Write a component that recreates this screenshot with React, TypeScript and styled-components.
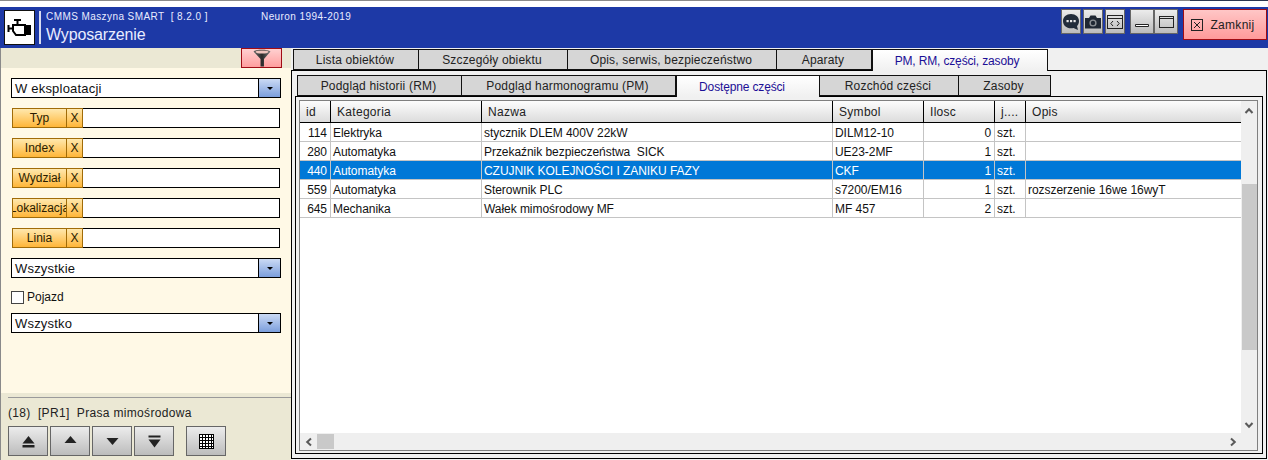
import React from "react";
import styled, { createGlobalStyle } from "styled-components";

const Global = createGlobalStyle`
  html, body { margin: 0; padding: 0; background: #5a5a5a; }
  body { font-family: "Liberation Sans", Arial, sans-serif; font-size: 12px; color: #111; }
  #root { width: 1268px; height: 460px; overflow: hidden; }
`;

const Page = styled.div`
  width: 1268px; height: 460px; display: flex; flex-direction: column; overflow: hidden;
`;
const TopStrip = styled.div`
  height: 7px; flex: none;
  background: linear-gradient(to right, #8a8a8a 1190px, #2a3550 1190px) top / 100% 1px no-repeat, #fff;
`;
const Header = styled.header`
  height: 41px; flex: none; background: #1d39a6; display: flex; align-items: flex-start; padding: 2px 1px 0 4px; box-sizing: border-box;
`;
const LogoBox = styled.div`
  width: 31px; height: 35px; margin-top: 1px; box-sizing: border-box; background: #fff; border: 1px solid #111; display: flex; align-items: center; justify-content: center;
`;
const Divider = styled.div`
  width: 2px; height: 33px; background: #d8dcf0; margin: 2px 5px 0 4px; flex: none;
`;
const TitleBlock = styled.div`
  color: #e9ecff; display: flex; flex-direction: column; width: 1015px; flex: none;
`;
const TitleLine = styled.div`
  display: flex; font-size: 10px; line-height: 12px; letter-spacing: 0.42px; white-space: pre; margin-top: 2px;
`;
const AppName = styled.span`
  width: 215px;
`;
const ScreenName = styled.div`
  font-size: 16px; line-height: 20px; margin-top: 2px; letter-spacing: -0.15px;
`;
const WinGroup = styled.div`
  display: flex; gap: ${p => p.$gap}px; margin-right: ${p => p.$after}px; flex: none;
`;
const WinButton = styled.button`
  width: ${p => p.$w}px; height: 25px; padding: 0; box-sizing: border-box; border: 1px solid #666; background: linear-gradient(#ececec, #bcbcbc); display: flex; align-items: center; justify-content: center;
`;
const CloseButton = styled.button`
  width: 84px; height: 31px; box-sizing: border-box; padding: 0 4px 0 0; border: 1px solid #a00c14; background: linear-gradient(#ffc6c6, #ff9a9a); color: #222; font: 12px "Liberation Sans", Arial, sans-serif; letter-spacing: 0.3px; display: flex; align-items: center; justify-content: center; gap: 7px;
`;

const Body = styled.div`
  flex: 1; display: flex; min-height: 0;
`;
const Sidebar = styled.aside`
  width: 291px; flex: none; display: flex; flex-direction: column; background: #fff9e6; border-left: 1px solid #8a8a8a; box-sizing: border-box;
`;
const FilterBar = styled.div`
  height: 20px; flex: none; background: #ebe8d4; display: flex; justify-content: flex-end; padding-right: 9px;
`;
const FilterButton = styled.button`
  width: 41px; height: 20px; padding: 0; box-sizing: border-box; border: 1px solid #a00c14; background: linear-gradient(#ffd0d0, #ff9e9e); display: flex; align-items: center; justify-content: center;
`;
const Filters = styled.div`
  flex: 1; padding: 10px 10px 0 10px; display: flex; flex-direction: column; gap: 10px;
`;
const Combo = styled.div`
  height: 20px; width: 270px; flex: none; box-sizing: border-box; border: 1px solid #000; background: #fff; display: flex; align-items: stretch;
`;
const ComboText = styled.div`
  flex: 1; padding-left: 3px; font-size: 13px; line-height: 20px; color: #111; letter-spacing: 0.2px;
`;
const ComboArrow = styled.div`
  width: 21px; border-left: 1px solid #000; background: linear-gradient(#cbdaf4, #7c9fdc); display: flex; align-items: center; justify-content: center;
  &::after { content: ""; border-left: 3.5px solid transparent; border-right: 3.5px solid transparent; border-top: 3.5px solid #000; }
`;
const FilterRow = styled.div`
  height: 20px; width: 268px; margin-left: 1px; flex: none; display: flex;
`;
const OrangeButton = styled.div`
  width: ${p => p.$w}px; flex: none; box-sizing: border-box; border: 1px solid #a16c08; border-left-width: ${p => p.$noLeft ? 0 : 1}px; background: linear-gradient(#ffe8ad, #ffb638); display: flex; align-items: center; justify-content: center; overflow: hidden; white-space: nowrap; font-size: 12px; color: #2a1c00;
`;
const FilterInput = styled.div`
  flex: 1; box-sizing: border-box; background: #fff; border: 1px solid #000; border-left: none;
`;
const CheckRow = styled.label`
  display: flex; align-items: center; gap: 3px; height: 14px; margin: 2px 0 -1px; font-size: 12px;
`;
const CheckBox = styled.span`
  width: 13px; height: 13px; box-sizing: border-box; border: 1px solid #444; background: #fff; flex: none;
`;
const Footer = styled.div`
  height: 67px; flex: none; background: #ebe8d4; padding: 4px 0 0 7px; box-sizing: border-box; display: flex; flex-direction: column;
`;
const FooterRule = styled.div`
  height: 1px; background: #9a9a9a;
`;
const FooterText = styled.div`
  height: 28px; line-height: 30px; font-size: 12px; white-space: pre; color: #222; letter-spacing: 0.32px;
`;
const NavRow = styled.div`
  display: flex; gap: 2px;
`;
const NavButton = styled.button`
  width: 40px; height: 30px; padding: 0; box-sizing: border-box; border: 1px solid #666; background: linear-gradient(#ececec, #bcbcbc); display: flex; align-items: center; justify-content: center; margin-left: ${p => p.$ml || 0}px;
`;

const Main = styled.main`
  flex: 1; display: flex; flex-direction: column; background: #f0f0f0; min-width: 0;
`;
const TabRow = styled.div`
  display: flex; flex: none; height: ${p => p.$h}px; padding-left: 2px; margin-top: ${p => p.$mt}px; position: relative; z-index: 1;
`;
const Tab = styled.div`
  width: ${p => p.$w}px; box-sizing: border-box; height: ${p => p.$h + (p.$active ? 1 : 0)}px; border: 1px solid #111; border-left-width: ${p => p.$first || p.$active ? 1 : 0}px; border-bottom-width: ${p => p.$active ? 0 : 1}px;
  background: ${p => p.$active ? "linear-gradient(#ffffff, #f0f0f0)" : "#d6d6d6"};
  color: ${p => p.$active ? "#1c0f96" : "#222"};
  display: flex; align-items: center; justify-content: center; font-size: 12px; letter-spacing: ${p => p.$active ? "-0.15px" : "0.17px"}; padding-right: ${p => p.$pr ?? 2}px; white-space: nowrap;
`;
const OuterPanel = styled.div`
  width: 976px; height: 389px; box-sizing: border-box; border: 1px solid #000; background: #f0f0f0; padding: 4px 3px 4px 3px; display: flex; flex-direction: column; flex: none;
`;
const InnerPanel = styled.div`
  flex: 1; min-height: 0; width: 968px; box-sizing: border-box; border: 1px solid #000; background: #f0f0f0; padding: 3px 3px 2px 3px; display: flex;
`;
const GridFrame = styled.div`
  flex: 1; box-sizing: border-box; border: 1px solid #808080; display: grid; grid-template-columns: 941px 16px; grid-template-rows: 1fr 17px; background: #fff; margin-right: 1px;
`;
const TableArea = styled.div`
  background: #fff; overflow: hidden;
`;
const Table = styled.table`
  border-collapse: separate; border-spacing: 0; table-layout: fixed; width: 941px; font-size: 12px;
`;
const Th = styled.th`
  height: 21px; padding: 0 0 0 ${p => p.$pad}px; box-sizing: content-box; text-align: left; font-weight: 400; color: #222; letter-spacing: 0.3px; background: linear-gradient(#fdfdfd, #dcdcdc); border-bottom: 1px solid #000; border-right: 1px solid #000; white-space: nowrap; overflow: hidden;
  &:last-child { border-right: none; }
`;
const Tr = styled.tr`
  background: ${p => p.$selected ? "#0078d7" : "#fff"};
  color: ${p => p.$selected ? "#fff" : "#111"};
`;
const Td = styled.td`
  height: 17px; padding: 1px ${p => p.$right ? 3 : 0}px 0 ${p => p.$right ? 0 : 2}px; text-align: ${p => p.$right ? "right" : "left"}; border-bottom: 1px solid #c4c4c4; border-right: 1px solid #c4c4c4; white-space: pre; overflow: hidden; letter-spacing: -0.05px;
  &:last-child { border-right: none; }
`;
const VBar = styled.div`
  grid-row: 1; grid-column: 2; background: #efefef; display: flex; flex-direction: column; align-items: center; position: relative;
`;
const ArrowSlot = styled.div`
  height: ${p => p.$h}px; flex: none; display: flex; align-items: center; justify-content: center; width: 100%;
`;
const HArrowSlot = styled.div`
  height: 15px; width: 17px; flex: none; display: flex; align-items: center; justify-content: center;
`;
const VThumb = styled.div`
  width: 15px; height: 166px; margin-left: 1px; background: #c9c9c9; flex: none;
`;
const VSpacer = styled.div`
  flex: 1;
`;
const HBar = styled.div`
  grid-row: 2; grid-column: 1; background: #efefef; display: flex; align-items: center;
`;
const HThumb = styled.div`
  width: 17px; height: 15px; background: #c9c9c9; flex: none;
`;
const Corner = styled.div`
  grid-row: 2; grid-column: 2; background: #efefef;
`;
const ChevronSvg = styled.svg`
  transform: rotate(${p => p.$rot}deg);
`;
const ShiftedSvg = styled.svg`
  margin-top: ${p => p.$mt || 0}px;
`;

const Chevron = ({ rot }: { rot: number }) => (
  <ChevronSvg $rot={rot} width="10" height="10" viewBox="0 0 10 10">
    <path d="M1.5 7 L5 3.2 L8.5 7" fill="none" stroke="#5a5a5a" strokeWidth="2" />
  </ChevronSvg>
);

const EngineIcon = () => (
  <svg width="25" height="18" viewBox="0 0 25 18">
    <g fill="none" stroke="#000" strokeWidth="2">
      <path d="M7 1 H14 M10.5 1 V5" />
      <path d="M6 6 H18 V16 H9 L6 12 Z" />
      <path d="M6 9.5 H2 M1.5 6 V13" />
    </g>
    <rect x="18" y="6" width="6" height="10" fill="#000" />
  </svg>
);
const ChatIcon = () => (
  <svg width="18" height="18" viewBox="0 0 18 18">
    <path d="M9 1 C13.7 1 17 4 17 8 C17 10.5 16 12 15 13 L16 17 L11.5 15 C10.8 15.2 9.9 15.3 9 15.3 C4.3 15.3 1 12.2 1 8 C1 4 4.3 1 9 1 Z" fill="#222c3a" />
    <g fill="#e8e8e8"><rect x="4.5" y="7" width="2.2" height="2.2" /><rect x="8" y="7" width="2.2" height="2.2" /><rect x="11.5" y="7" width="2.2" height="2.2" /></g>
  </svg>
);
const CameraIcon = () => (
  <svg width="18" height="16" viewBox="0 0 18 16">
    <path d="M1 4 H5 L6.5 1.5 H11.5 L13 4 H17 V14.5 H1 Z" fill="#1f2733" />
    <circle cx="9" cy="9" r="3.6" fill="#8b8f94" />
    <circle cx="9" cy="9" r="2.2" fill="#1f2733" />
  </svg>
);
const CodeIcon = () => (
  <svg width="16" height="14" viewBox="0 0 16 14">
    <rect x="0.5" y="0.5" width="15" height="13" fill="none" stroke="#222" />
    <path d="M1 3.5 H15" stroke="#222" />
    <path d="M6 6 L3.8 8.5 L6 11 M10 6 L12.2 8.5 L10 11" fill="none" stroke="#222" />
  </svg>
);
const MinimizeIcon = () => (
  <svg width="16" height="18" viewBox="0 0 16 18"><path d="M1.5 11.5 H14.5 V13.5 H1.5 Z" fill="#fff" stroke="#222" strokeWidth="1" /></svg>
);
const MaximizeIcon = () => (
  <ShiftedSvg $mt={1} width="15" height="13" viewBox="0 0 15 13">
    <rect x="0.5" y="0.5" width="14" height="11" fill="none" stroke="#222" />
    <path d="M1 2.5 H14" stroke="#222" />
  </ShiftedSvg>
);
const CloseIcon = () => (
  <svg width="12" height="12" viewBox="0 0 12 12">
    <rect x="0.5" y="0.5" width="11" height="11" fill="none" stroke="#222" />
    <path d="M3 3 L9 9 M9 3 L3 9" stroke="#222" />
  </svg>
);
const FunnelIcon = () => (
  <svg width="20" height="18" viewBox="0 0 20 18">
    <defs>
      <linearGradient id="fn" x1="0" x2="1"><stop offset="0" stopColor="#666" /><stop offset="0.5" stopColor="#2a2a2a" /><stop offset="1" stopColor="#777" /></linearGradient>
    </defs>
    <path d="M1.5 2.5 C4 0 16 0 18.5 2.5 L12 10 V17.5 H8.5 V10 Z" fill="url(#fn)" />
    <ellipse cx="10" cy="3" rx="6.5" ry="1.6" fill="#efc4bd" />
  </svg>
);
const NavFirst = () => (
  <svg width="13" height="13" viewBox="0 0 13 13"><path d="M6.5 1 L12.5 8.5 H0.5 Z" fill="#222" /><rect x="0.5" y="10" width="12" height="2.5" fill="#222" /></svg>
);
const NavUp = () => (
  <ShiftedSvg $mt={-3} width="13" height="10" viewBox="0 0 13 10"><path d="M6.5 1 L12.5 8 H0.5 Z" fill="#222" /></ShiftedSvg>
);
const NavDown = () => (
  <ShiftedSvg $mt={1} width="13" height="10" viewBox="0 0 13 10"><path d="M6.5 8 L12.5 1 H0.5 Z" fill="#222" /></ShiftedSvg>
);
const NavLast = () => (
  <svg width="13" height="13" viewBox="0 0 13 13"><rect x="0.5" y="0.5" width="12" height="2" fill="#222" /><path d="M6.5 12.5 L12.5 4.5 H0.5 Z" fill="#222" /></svg>
);
const GridIcon = () => (
  <svg width="15" height="15" viewBox="0 0 15 15">
    <rect x="0.5" y="0.5" width="14" height="14" fill="#fff" stroke="#000" />
    <path d="M0 3.5 H15 M0 6.5 H15 M0 9.5 H15 M0 12.5 H15 M3.5 0 V15 M6.5 0 V15 M9.5 0 V15 M12.5 0 V15" stroke="#000" strokeWidth="1" fill="none" />
  </svg>
);

const filterRows = ["Typ", "Index", "Wydział", "Lokalizacja", "Linia"];
const mainTabs = [
  { t: "Lista obiektów", w: 126 }, { t: "Szczegóły obiektu", w: 149 }, { t: "Opis, serwis, bezpieczeństwo", w: 209 },
  { t: "Aparaty", w: 95 }, { t: "PM, RM, części, zasoby", w: 176, active: true, pr: 6 },
];
const subTabs = [
  { t: "Podgląd historii (RM)", w: 165 }, { t: "Podgląd harmonogramu (PM)", w: 214 }, { t: "Dostępne części", w: 144, active: true, pr: 12 },
  { t: "Rozchód części", w: 139 }, { t: "Zasoby", w: 92 },
];
const cols = [
  { t: "id", w: 31, pad: 6 }, { t: "Kategoria", w: 151, pad: 6 }, { t: "Nazwa", w: 351, pad: 6 },
  { t: "Symbol", w: 91, pad: 6 }, { t: "Ilosc", w: 71, pad: 6 }, { t: "j....", w: 31, pad: 6 }, { t: "Opis", w: 215, pad: 6 },
];
const rows = [
  ["114", "Elektryka", "stycznik DLEM 400V 22kW", "DILM12-10", "0", "szt.", ""],
  ["280", "Automatyka", "Przekaźnik bezpieczeństwa  SICK", "UE23-2MF", "1", "szt.", ""],
  ["440", "Automatyka", "CZUJNIK KOLEJNOŚCI I ZANIKU FAZY", "CKF", "1", "szt.", ""],
  ["559", "Automatyka", "Sterownik PLC", "s7200/EM16", "1", "szt.", "rozszerzenie 16we 16wyT"],
  ["645", "Mechanika", "Wałek mimośrodowy MF", "MF 457", "2", "szt.", ""],
];

export default function App() {
  return (
    <Page>
      <Global />
      <TopStrip />
      <Header>
        <LogoBox><EngineIcon /></LogoBox>
        <Divider />
        <TitleBlock>
          <TitleLine><AppName>CMMS Maszyna SMART  [ 8.2.0 ]</AppName><span>Neuron 1994-2019</span></TitleLine>
          <ScreenName>Wyposarzenie</ScreenName>
        </TitleBlock>
        <WinGroup $gap={2} $after={5}>
          <WinButton $w={20}><ChatIcon /></WinButton>
          <WinButton $w={20}><CameraIcon /></WinButton>
          <WinButton $w={20}><CodeIcon /></WinButton>
        </WinGroup>
        <WinGroup $gap={0} $after={5}>
          <WinButton $w={24}><MinimizeIcon /></WinButton>
          <WinButton $w={24}><MaximizeIcon /></WinButton>
        </WinGroup>
        <CloseButton><CloseIcon />Zamknij</CloseButton>
      </Header>
      <Body>
        <Sidebar>
          <FilterBar><FilterButton><FunnelIcon /></FilterButton></FilterBar>
          <Filters>
            <Combo><ComboText>W eksploatacji</ComboText><ComboArrow /></Combo>
            {filterRows.map(r => (
              <FilterRow key={r}>
                <OrangeButton $w={55}>{r}</OrangeButton>
                <OrangeButton $w={16} $noLeft>X</OrangeButton>
                <FilterInput />
              </FilterRow>
            ))}
            <Combo><ComboText>Wszystkie</ComboText><ComboArrow /></Combo>
            <CheckRow><CheckBox />Pojazd</CheckRow>
            <Combo><ComboText>Wszystko</ComboText><ComboArrow /></Combo>
          </Filters>
          <Footer>
            <FooterRule />
            <FooterText>(18)  [PR1]  Prasa mimośrodowa</FooterText>
            <NavRow>
              <NavButton><NavFirst /></NavButton>
              <NavButton><NavUp /></NavButton>
              <NavButton><NavDown /></NavButton>
              <NavButton><NavLast /></NavButton>
              <NavButton $ml={10}><GridIcon /></NavButton>
            </NavRow>
          </Footer>
        </Sidebar>
        <Main>
          <TabRow $h={21} $mt={1}>
            {mainTabs.map((x, i) => <Tab key={x.t} $w={x.w} $h={21} $first={i === 0} $active={x.active} $pr={x.pr}>{x.t}</Tab>)}
          </TabRow>
          <OuterPanel>
            <TabRow $h={21} $mt={0}>
              {subTabs.map((x, i) => <Tab key={x.t} $w={x.w} $h={21} $first={i === 0} $active={x.active} $pr={x.pr}>{x.t}</Tab>)}
            </TabRow>
            <InnerPanel>
              <GridFrame>
                <TableArea>
                  <Table>
                    <colgroup>{cols.map(c => <col key={c.t} style={{ width: c.w }} />)}</colgroup>
                    <thead><tr>{cols.map(c => <Th key={c.t} $pad={c.pad}>{c.t}</Th>)}</tr></thead>
                    <tbody>
                      {rows.map((r, i) => (
                        <Tr key={r[0]} $selected={i === 2}>
                          {r.map((v, j) => <Td key={j} $right={j === 0 || j === 4}>{v}</Td>)}
                        </Tr>
                      ))}
                    </tbody>
                  </Table>
                </TableArea>
                <VBar>
                  <ArrowSlot $h={19}><Chevron rot={0} /></ArrowSlot>
                  <ArrowSlot $h={64} />
                  <VThumb />
                  <VSpacer />
                  <ArrowSlot $h={16}><Chevron rot={180} /></ArrowSlot>
                </VBar>
                <HBar>
                  <HArrowSlot><Chevron rot={-90} /></HArrowSlot>
                  <HThumb />
                  <VSpacer />
                  <HArrowSlot><Chevron rot={90} /></HArrowSlot>
                </HBar>
                <Corner />
              </GridFrame>
            </InnerPanel>
          </OuterPanel>
        </Main>
      </Body>
    </Page>
  );
}
